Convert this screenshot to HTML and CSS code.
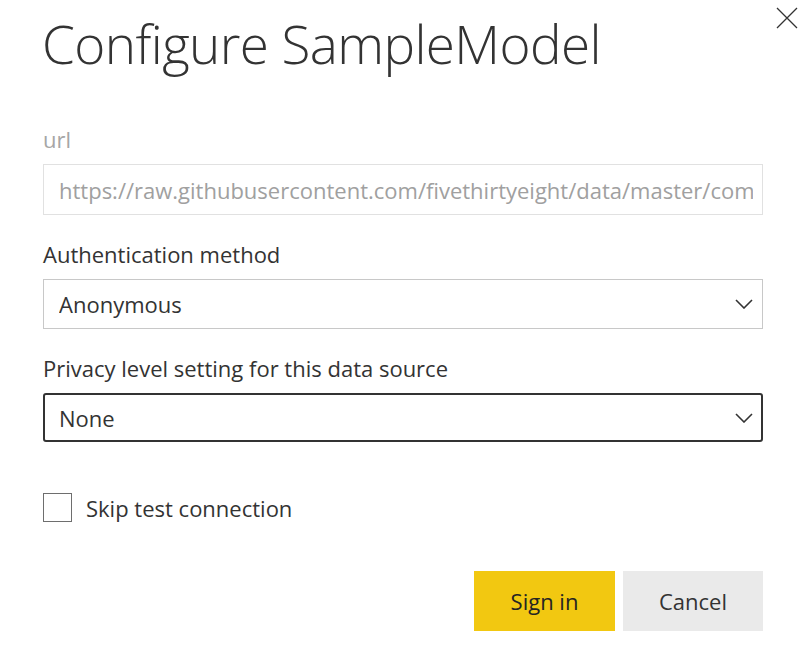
FILE: index.html
```html
<!DOCTYPE html>
<html lang="en">
<head>
<meta charset="utf-8">
<title>Configure SampleModel</title>
<link rel="stylesheet" href="styles.css">
</head>
<body>
<div class="dialog">
  <div class="header">
    <h1 class="title">Configure SampleModel</h1>
    <button class="close" aria-label="Close">
      <svg width="22" height="22" viewBox="0 0 22 22"><path d="M1 1 L21 21 M21 1 L1 21" stroke="#333" stroke-width="1.3" fill="none"/></svg>
    </button>
  </div>

  <div class="field">
    <label class="label label-disabled">url</label>
    <div class="input input-disabled"><span class="input-text">https://raw.githubusercontent.com/fivethirtyeight/data/master/comi</span></div>
  </div>

  <div class="field">
    <label class="label">Authentication method</label>
    <div class="input select"><span class="input-text">Anonymous</span>
      <svg class="chev" width="18" height="10" viewBox="0 0 18 10"><path d="M1 1 L9 9 L17 1" stroke="#333" stroke-width="1.6" fill="none"/></svg>
    </div>
  </div>

  <div class="field">
    <label class="label">Privacy level setting for this data source</label>
    <div class="input select select-focus"><span class="input-text">None</span>
      <svg class="chev" width="18" height="10" viewBox="0 0 18 10"><path d="M1 1 L9 9 L17 1" stroke="#333" stroke-width="1.6" fill="none"/></svg>
    </div>
  </div>

  <div class="check-row">
    <span class="checkbox"></span>
    <span class="check-label">Skip test connection</span>
  </div>

  <div class="actions">
    <button class="btn btn-primary">Sign in</button>
    <button class="btn btn-secondary">Cancel</button>
  </div>
</div>
</body>
</html>
```
FILE: styles.css
```css
* { box-sizing: border-box; }
html, body { margin: 0; padding: 0; background: #fff; }
body {
  font-family: "Open Sans", "Noto Sans", "DejaVu Sans", sans-serif;
  color: #333;
}
.dialog {
  width: 803px;
  height: 657px;
  padding: 0 40px 0 43px;
  display: flex;
  flex-direction: column;
}
.header {
  display: flex;
  justify-content: space-between;
  align-items: flex-start;
  height: 125px;
  margin-right: -40px;
}
.title {
  margin: 12px 0 0 -1px;
  font-size: 53px;
  font-weight: 300;
  line-height: 64px;
  color: #333;
  letter-spacing: -0.6px;
}
.close {
  border: 0;
  background: none;
  padding: 0;
  margin: 7px 5px 0 0;
  width: 22px;
  height: 22px;
  display: block;
}
.close svg { display: block; }
.field {
  display: flex;
  flex-direction: column;
  margin-bottom: 25px;
}
.label {
  font-size: 22px;
  line-height: 28px;
  height: 28px;
  margin-bottom: 11px;
  color: #333;
}
.label-disabled { color: #a6a6a6; }
.input {
  height: 50px;
  border: 1px solid #c8c8c8;
  display: flex;
  align-items: center;
  padding: 0 9px 0 15px;
  font-size: 22px;
  overflow: hidden;
  white-space: nowrap;
  color: #333;
}
.input-disabled {
  height: 51px;
  border-color: #e1e1e1;
  color: #a0a0a0;
}
.input-text {
  flex: 1;
  overflow: hidden;
}
.select-focus {
  border: 2px solid #333;
  border-radius: 3px;
  height: 49px;
  padding-left: 14px;
  padding-right: 8px;
}
.chev { display: block; flex: none; }
.check-row {
  display: flex;
  align-items: center;
  margin-top: 26px;
  height: 29px;
}
.checkbox {
  width: 29px;
  height: 29px;
  border: 1px solid #6e6e6e;
  background: #fff;
  margin-right: 14px;
}
.check-label {
  font-size: 22px;
  color: #333;
}
.actions {
  display: flex;
  justify-content: flex-end;
  gap: 8px;
  margin-top: 49px;
}
.btn {
  border: 0;
  height: 60px;
  font-family: inherit;
  font-size: 22px;
  padding: 0;
}
.btn-primary {
  width: 141px;
  background: #f2c811;
  color: #252423;
}
.btn-secondary {
  width: 140px;
  background: #eaeaea;
  color: #333;
}
```
